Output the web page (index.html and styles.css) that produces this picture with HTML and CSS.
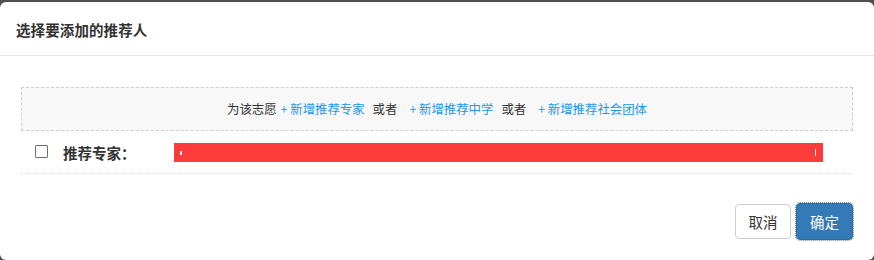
FILE: index.html
```html
<!DOCTYPE html>
<html lang="zh-CN">
<head>
<meta charset="utf-8">
<title>选择要添加的推荐人</title>
<link rel="stylesheet" href="styles.css">
</head>
<body>
<div class="modal">
  <div class="modal-header">
    <h4 class="modal-title">选择要添加的推荐人</h4>
  </div>
  <div class="modal-body">
    <div class="add-box">
      <span class="plain">为该志愿</span>
      <a class="add-link">+ 新增推荐专家</a>
      <span class="plain sep">或者</span>
      <a class="add-link">+ 新增推荐中学</a>
      <span class="plain sep">或者</span>
      <a class="add-link">+ 新增推荐社会团体</a>
    </div>
    <div class="rec-row">
      <span class="check"></span>
      <span class="rec-label">推荐专家：</span>
      <div class="redact">
        <span class="mark-dot"></span>
        <span class="mark-line"></span>
      </div>
    </div>
  </div>
  <div class="modal-footer">
    <button class="btn btn-default">取消</button>
    <button class="btn btn-primary">确定</button>
  </div>
</div>
</body>
</html>
```
FILE: styles.css
```css
* { box-sizing: border-box; }
html, body {
  margin: 0;
  padding: 0;
  background: #4f4f4f;
  width: 874px;
  height: 260px;
  overflow: hidden;
  font-family: "Noto Sans CJK SC", "Liberation Sans", sans-serif;
}
.modal {
  margin-top: 2px;
  width: 874px;
  height: 258px;
  background: #fff;
  border-radius: 6px;
  display: flex;
  flex-direction: column;
}
.modal-header {
  height: 54px;
  padding: 0 16px;
  display: flex;
  align-items: center;
  border-bottom: 1px solid #e5e5e5;
}
.modal-title {
  margin: 2px 0 0;
  font-size: 14.5px;
  letter-spacing: 0.1px;
  font-weight: 600;
  color: #333;
  line-height: 20px;
}
.modal-body {
  padding: 31px 21px 0;
}
.add-box {
  height: 44px;
  border: 1px dashed #cfcfcf;
  background: #f8f8f8;
  display: flex;
  align-items: center;
  justify-content: center;
  font-size: 12.4px;
  line-height: 16px;
  white-space: pre;
}
.plain { color: #333; }
.sep { margin: 0 8px 0 8px; }
.add-link {
  color: #1a96f0;
  margin-left: 4px;
  text-decoration: none;
}
.rec-row {
  height: 43px;
  border-bottom: 1px dotted #dcdcdc;
  display: flex;
  align-items: center;
  padding-left: 14px;
}
.check {
  width: 13px;
  height: 13px;
  border: 1px solid #6f6f6f;
  border-radius: 1px;
  background: #fff;
  margin-top: -2px;
}
.rec-label {
  margin-left: 15px;
  width: 111px;
  font-size: 14.5px;
  font-weight: 700;
  color: #333;
}
.redact {
  width: 649px;
  height: 19px;
  background: #fc3b3b;
  display: flex;
  align-items: center;
  justify-content: space-between;
  padding: 0 7px 0 6px;
}
.mark-dot {
  width: 2px;
  height: 4px;
  background: #fff;
  margin-top: 1px;
}
.mark-line {
  width: 1px;
  height: 7px;
  background: #fff;
  margin-top: 1px;
}
.modal-footer {
  display: flex;
  justify-content: flex-end;
  gap: 5px;
  padding: 30px 21px 0;
}
.btn {
  height: 35px;
  padding: 0 6px;
  font-family: "Noto Sans CJK SC", "Liberation Sans", sans-serif;
  font-size: 14.5px;
  border-radius: 4px;
  line-height: 33px;
}
.btn-default {
  width: 56px;
  background: #fff;
  color: #333;
  border: 1px solid #ccc;
}
.btn-primary {
  width: 57px;
  background: #337ab7;
  color: #fff;
  border: 1px solid #2e6da4;
  outline: 1px dotted #888;
  outline-offset: 0;
  margin-top: -1px;
  height: 37px;
}
```
